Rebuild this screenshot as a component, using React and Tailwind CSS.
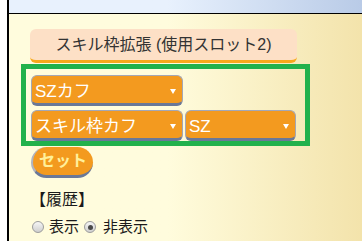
import React from "react";

const font = { fontFamily: '"Liberation Sans", "Noto Sans CJK JP", sans-serif' };

function Select({ label, width }) {
  return (
    <div
      className={`${width} h-[31px] flex items-center justify-between bg-[#f39a1f] rounded-[6px] border border-[#a3a7b6] border-b-[3px] border-b-[#6a7898] pl-[3px] pr-[6px] text-white text-[17px]`}
    >
      <span className="leading-none mt-[3px]">{label}</span>
      {/* dropdown arrow */}
      <svg width="6" height="5" viewBox="0 0 6 5" className="mt-[3px]">
        <path d="M0 0 L6 0 L3 5 Z" fill="#ffffff" />
      </svg>
    </div>
  );
}

function Radio({ checked }) {
  return (
    <div className="w-[12px] h-[12px] rounded-full border border-[#9c9c9c] bg-linear-to-b from-[#f6f6f6] to-[#cfcfcf] flex items-center justify-center">
      {checked && <div className="w-[5px] h-[5px] rounded-full bg-[#4a4a4a]" />}
    </div>
  );
}

export default function App() {
  return (
    <div className="w-[362px] h-[241px] overflow-hidden bg-white pl-[7px]" style={font}>
      <div className="h-full border-l-2 border-black flex flex-col">
        {/* top bar */}
        <div className="h-[14px] shrink-0 border-b border-black bg-linear-to-r from-[#e8f1fd] from-45% to-[#b9cbe7]" />

        {/* panel */}
        <div className="flex-1 bg-linear-to-r from-[#fffcdd] from-45% to-[#f3e3ab] pl-[21px] pt-[15px]">
          {/* expand button */}
          <div className="w-[267px] h-[34px] flex items-center justify-center bg-[#fde0c6] rounded-[6px] border-b-[3px] border-[#f8a81c] text-[16px] text-[#333333]">
            スキル枠拡張 (使用スロット2)
          </div>

          {/* selector group */}
          <div className="-ml-[9px] mt-[1px] w-[289px] border-[5px] border-[#22b14c] px-[5px] pt-[6px] flex flex-col gap-[4px]">
            <Select label="SZカフ" width="w-[152px]" />
            <div className="flex gap-[2px]">
              <Select label="スキル枠カフ" width="w-[152px]" />
              <Select label="SZ" width="w-[111px]" />
            </div>
          </div>

          {/* set button */}
          <div className="ml-[1px] mt-[1px] w-[62px] h-[31px] flex items-center justify-center rounded-full bg-[#f39a1f] border-l-2 border-l-[#b0b4c0] border-b-[3px] border-b-[#6a7898] text-[16px] font-bold text-[#fff09a]">
            セット
          </div>

          {/* history */}
          <div className="mt-[11px] leading-[22px] text-[16px] text-[#1a1a1a]">【履歴】</div>
          <div className="mt-[5px] h-[22px] flex items-center gap-[5px] pl-[2px] text-[15px] text-[#1a1a1a]">
            <Radio />
            <span>表示</span>
            <Radio checked />
            <span className="ml-[2px]">非表示</span>
          </div>
        </div>
      </div>
    </div>
  );
}
